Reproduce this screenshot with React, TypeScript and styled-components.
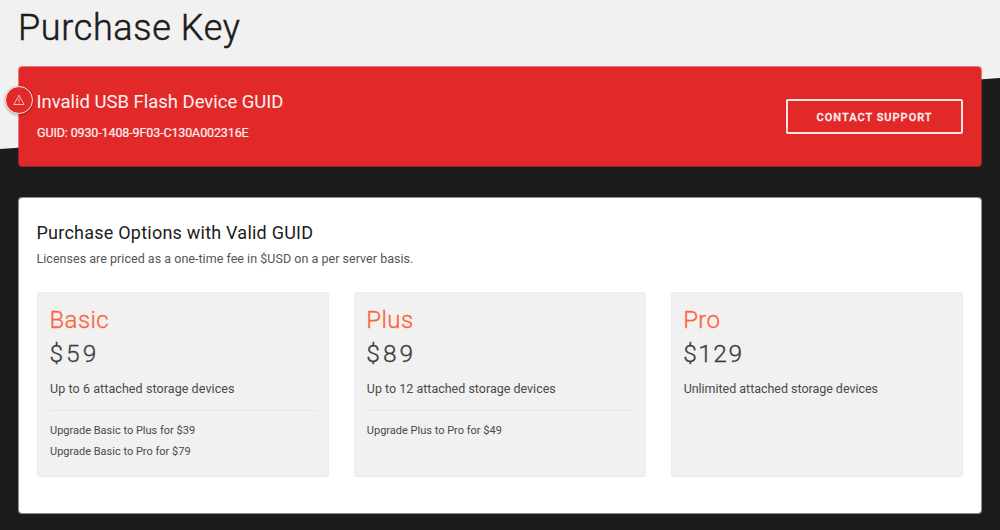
import styled, { createGlobalStyle } from 'styled-components';

const GlobalStyle = createGlobalStyle`
    * {
        box-sizing: border-box;
    }

    body {
        margin: 0;
        background: #1c1c1c;
        font-family: Roboto, 'Liberation Sans', sans-serif;
    }

    h1, h2, h3, p, ul {
        margin: 0;
        padding: 0;
        font-weight: 400;
    }
`;

const Page = styled.main`
    height: 530px;
    padding: 6px 18px 0;
    overflow: hidden;
    background: linear-gradient(
            to top left,
            #1c1c1c calc(50% - 0.5px),
            #f1f1f1 calc(50% + 0.5px)
        )
        0 78px / 100% 71px no-repeat,
        linear-gradient(#f1f1f1, #f1f1f1) 0 0 / 100% 78px no-repeat,
        #1c1c1c;
`;

const PageTitle = styled.h1`
    margin-bottom: 16px;
    color: #1c1c1c;
    font-size: 36px;
    font-weight: 300;
    line-height: 44px;
    letter-spacing: 0.65px;
    -webkit-text-stroke: 0.5px #1c1c1c;
`;

const Panel = styled.section`
    border: 1px solid rgba(255, 255, 255, 0.5);
    border-radius: 4px;
    background: #fff;
    background-clip: padding-box;
`;

const ErrorBanner = styled(Panel)`
    position: relative;
    display: flex;
    align-items: center;
    justify-content: space-between;
    height: 101px;
    margin-bottom: 30px;
    padding: 0 18px;
    border-color: rgba(226, 41, 41, 0.6);
    background-color: #e22929;
    color: #fdf1f0;
`;

const AlertBadge = styled.span`
    position: absolute;
    top: 19px;
    left: -14px;
    display: flex;
    align-items: center;
    justify-content: center;
    width: 28px;
    height: 28px;
    border: 1.5px solid #f4e6e6;
    border-radius: 50%;
    background: #e22929;
    box-shadow: 0 1px 3px rgba(0, 0, 0, 0.3);
`;

const BannerTitle = styled.h2`
    margin: -1px 0 8px -0.5px;
    font-size: 18.5px;
    line-height: 26px;
    letter-spacing: -0.02px;
`;

const BannerGuid = styled.p`
    font-size: 12.5px;
    line-height: 20px;
    letter-spacing: -0.12px;
    -webkit-text-stroke: 0.2px #fdf1f0;
`;

const SupportButton = styled.button`
    width: 177px;
    height: 35px;
    padding: 1px 0 0;
    border: 2px solid #fbe3e2;
    border-radius: 2px;
    background: transparent;
    color: #fdf1f0;
    font: 500 11px Roboto, sans-serif;
    letter-spacing: 1.02px;
    text-transform: uppercase;
    -webkit-text-stroke: 0.3px #fdf1f0;
`;

const OptionsPanel = styled(Panel)`
    height: 317px;
    padding: 23px 18px 0;
`;

const OptionsTitle = styled.h2`
    margin: 0 0 4px -0.5px;
    color: #1c1c1c;
    font-size: 18px;
    line-height: 24px;
    letter-spacing: 0.23px;
`;

const OptionsText = styled.p`
    margin-left: -0.5px;
    color: #555;
    font-size: 12.5px;
    line-height: 20px;
    letter-spacing: 0.03px;
`;

const Plans = styled.div`
    display: grid;
    grid-template-columns: repeat(3, 1fr);
    gap: 24.5px;
    margin-top: 23px;
`;

const PlanCard = styled.article`
    height: 185px;
    padding: 10px 12px 0;
    border: 1px solid #ebebeb;
    border-radius: 3px;
    background: #f1f1f1;
`;

const PlanName = styled.h3`
    margin-left: -0.5px;
    color: #ff6239;
    font-size: 24px;
    font-weight: 300;
    line-height: 34px;
    letter-spacing: 0.4px;
    -webkit-text-stroke: 0.3px #ff6239;
`;

const PlanPrice = styled.p<{ $tracking: number }>`
    margin: 0 0 8px -0.5px;
    color: #3c3c3c;
    font-size: 24.5px;
    font-weight: 300;
    line-height: 34px;
    letter-spacing: ${({ $tracking }) => $tracking}px;
    -webkit-text-stroke: 0.3px #3c3c3c;
`;

const PlanLimit = styled.p<{ $tracking: number }>`
    color: #4a4a4a;
    font-size: 12.5px;
    line-height: 20px;
    letter-spacing: ${({ $tracking }) => $tracking}px;
`;

const Upgrades = styled.ul`
    margin-top: 11px;
    padding-top: 9px;
    border-top: 1px solid #e4e4e4;
    list-style: none;
`;

const Upgrade = styled.li`
    color: #4a4a4a;
    font-size: 11px;
    line-height: 21px;
`;

const plans = [
    {
        name: 'Basic',
        price: '$59',
        priceTracking: 3,
        limit: 'Up to 6 attached storage devices',
        limitTracking: 0.08,
        upgrades: [
            'Upgrade Basic to Plus for $39',
            'Upgrade Basic to Pro for $79'
        ]
    },
    {
        name: 'Plus',
        price: '$89',
        priceTracking: 3,
        limit: 'Up to 12 attached storage devices',
        limitTracking: 0,
        upgrades: ['Upgrade Plus to Pro for $49']
    },
    {
        name: 'Pro',
        price: '$129',
        priceTracking: 1.5,
        limit: 'Unlimited attached storage devices',
        limitTracking: -0.03,
        upgrades: []
    }
];

const WarningIcon = () => (
    <svg width="12" height="12" viewBox="0 0 12 12" fill="none">
        <path
            d="M6 1.2 11 10.5H1Z"
            stroke="#fbdcdb"
            strokeWidth="0.8"
            strokeLinejoin="round"
        />
        <path d="M6 4.3v3.2M6 8.3v1" stroke="#fbdcdb" strokeWidth="0.8" />
    </svg>
);

export default function App() {
    return (
        <Page>
            <GlobalStyle />
            <PageTitle>Purchase Key</PageTitle>

            <ErrorBanner>
                <AlertBadge>
                    <WarningIcon />
                </AlertBadge>
                <div>
                    <BannerTitle>Invalid USB Flash Device GUID</BannerTitle>
                    <BannerGuid>GUID: 0930-1408-9F03-C130A002316E</BannerGuid>
                </div>
                <SupportButton>Contact Support</SupportButton>
            </ErrorBanner>

            <OptionsPanel>
                <OptionsTitle>Purchase Options with Valid GUID</OptionsTitle>
                <OptionsText>
                    Licenses are priced as a one-time fee in $USD on a per
                    server basis.
                </OptionsText>

                <Plans>
                    {plans.map((plan) => (
                        <PlanCard key={plan.name}>
                            <PlanName>{plan.name}</PlanName>
                            <PlanPrice $tracking={plan.priceTracking}>
                                {plan.price}
                            </PlanPrice>
                            <PlanLimit $tracking={plan.limitTracking}>
                                {plan.limit}
                            </PlanLimit>
                            {plan.upgrades.length > 0 && (
                                <Upgrades>
                                    {plan.upgrades.map((upgrade) => (
                                        <Upgrade key={upgrade}>
                                            {upgrade}
                                        </Upgrade>
                                    ))}
                                </Upgrades>
                            )}
                        </PlanCard>
                    ))}
                </Plans>
            </OptionsPanel>
        </Page>
    );
}
